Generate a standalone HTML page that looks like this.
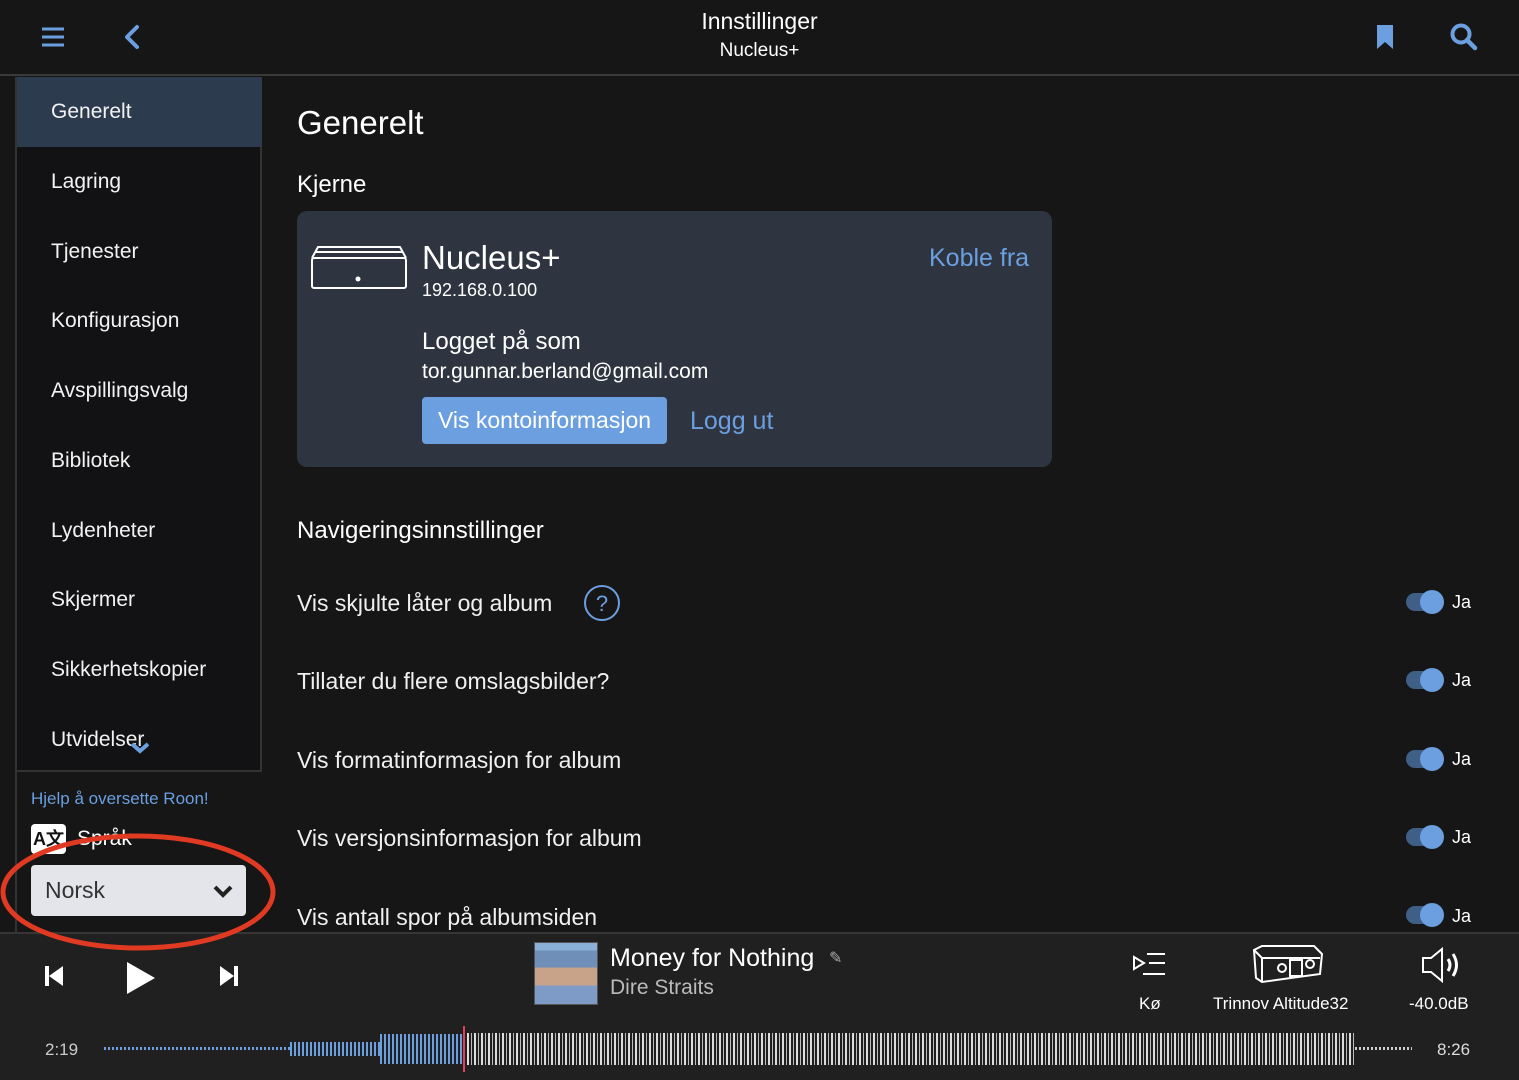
<!DOCTYPE html>
<html><head><meta charset="utf-8"><style>
*{margin:0;padding:0;box-sizing:border-box}
body{width:1519px;height:1080px;background:#161616;font-family:"Liberation Sans",sans-serif;color:#fff;position:relative;overflow:hidden}
.abs{position:absolute}
.top{left:0;top:0;width:1519px;height:76px;background:#161616;border-bottom:2px solid #3a3a3a}
.side{left:15px;top:77px;width:247px;height:856px;background:#121214;border-left:2px solid #333;border-right:2px solid #333}
.nav{position:absolute;left:0;width:245px;height:70px;font-size:21px;padding-left:34px;line-height:70px;color:#f2f2f2}
.lbl{font-size:23px;color:#f0f0f0}
.tog{position:absolute;left:1406px;width:36px;height:18px;border-radius:9px;background:#3f5f86}
.tog::after{content:"";position:absolute;right:-2px;top:-3px;width:24px;height:24px;border-radius:50%;background:#6b9fe0}
.ja{position:absolute;left:1452px;font-size:18px}
.player{left:0;top:932px;width:1519px;height:148px;background:#202020;border-top:2px solid #363636}
</style></head><body>
<div class="abs top">
 <svg class="abs" style="left:40px;top:26px" width="26" height="22"><g stroke="#6b9fe0" stroke-width="3"><line x1="2" y1="3" x2="24" y2="3"/><line x1="2" y1="11" x2="24" y2="11"/><line x1="2" y1="19" x2="24" y2="19"/></g></svg>
 <svg class="abs" style="left:122px;top:24px" width="20" height="26"><polyline points="15,3 5,13 15,23" fill="none" stroke="#6b9fe0" stroke-width="4" stroke-linecap="round" stroke-linejoin="round"/></svg>
 <div class="abs" style="left:0;width:1519px;top:8px;text-align:center;font-size:23px">Innstillinger</div>
 <div class="abs" style="left:0;width:1519px;top:40px;text-align:center;font-size:19px">Nucleus+</div>
 <svg class="abs" style="left:1375px;top:23px" width="20" height="28"><path d="M2 2H18V26L10 19L2 26Z" fill="#6b9fe0"/></svg>
 <svg class="abs" style="left:1449px;top:22px" width="30" height="30"><circle cx="12" cy="12" r="8.5" fill="none" stroke="#6b9fe0" stroke-width="4"/><line x1="18" y1="18" x2="26" y2="26" stroke="#6b9fe0" stroke-width="4.5" stroke-linecap="round"/></svg>
</div>
<div class="abs side">
 <div class="nav" style="top:0;background:#2d3b4f">Generelt</div>
 <div class="nav" style="top:70px">Lagring</div>
 <div class="nav" style="top:140px">Tjenester</div>
 <div class="nav" style="top:209px">Konfigurasjon</div>
 <div class="nav" style="top:279px">Avspillingsvalg</div>
 <div class="nav" style="top:349px">Bibliotek</div>
 <div class="nav" style="top:419px">Lydenheter</div>
 <div class="nav" style="top:488px">Skjermer</div>
 <div class="nav" style="top:558px">Sikkerhetskopier</div>
 <div class="nav" style="top:628px">Utvidelser</div>
 <svg class="abs" style="left:112px;top:664px" width="22" height="14"><polyline points="3,3 11,10 19,3" fill="none" stroke="#6b9fe0" stroke-width="4"/></svg>
 <div class="abs" style="left:0;top:693px;width:245px;height:2px;background:#333"></div>
 <div class="abs" style="left:0;top:695px;width:245px;height:161px;background:#161616"></div>
 <div class="abs" style="left:14px;top:712px;font-size:17px;color:#6b9fe0">Hjelp å oversette Roon!</div>
 <div class="abs" style="left:14px;top:747px;width:35px;height:30px;background:#fff;border-radius:4px;color:#111;font-weight:bold;font-size:18px;line-height:30px;text-align:center">A文</div>
 <div class="abs" style="left:60px;top:750px;font-size:21px">Språk</div>
 <div class="abs" style="left:14px;top:788px;width:215px;height:51px;background:#e3e5ea;border-radius:4px;color:#333;font-size:23px;line-height:51px;padding-left:14px">Norsk</div>
 <svg class="abs" style="left:195px;top:806px" width="22" height="16"><polyline points="3,4 11,12 19,4" fill="none" stroke="#222" stroke-width="4"/></svg>
</div>
<div class="abs" style="left:297px;top:104px;font-size:33px">Generelt</div>
<div class="abs" style="left:297px;top:171px;font-size:24px">Kjerne</div>
<div class="abs" style="left:297px;top:211px;width:755px;height:256px;background:#2f3540;border-radius:10px">
 <svg class="abs" style="left:13px;top:33px" width="100" height="48" fill="none" stroke="#fff" stroke-width="2"><path d="M2 14L8 3H90L96 14"/><line x1="5" y1="8" x2="93" y2="8"/><rect x="2" y="14" width="94" height="30" rx="2"/><circle cx="48" cy="35" r="2.5" fill="#fff" stroke="none"/></svg>
 <div class="abs" style="left:125px;top:28px;font-size:33px">Nucleus+</div>
 <div class="abs" style="left:125px;top:69px;font-size:18px">192.168.0.100</div>
 <div class="abs" style="left:632px;top:33px;font-size:25px;color:#6b9fe0">Koble fra</div>
 <div class="abs" style="left:125px;top:117px;font-size:24px">Logget på som</div>
 <div class="abs" style="left:125px;top:149px;font-size:21px">tor.gunnar.berland@gmail.com</div>
 <div class="abs" style="left:125px;top:186px;width:245px;height:47px;background:#6b9fe0;border-radius:4px;font-size:23px;line-height:47px;text-align:center">Vis kontoinformasjon</div>
 <div class="abs" style="left:393px;top:196px;font-size:25px;color:#6b9fe0">Logg ut</div>
</div>
<div class="abs" style="left:297px;top:517px;font-size:24px">Navigeringsinnstillinger</div>
<div class="abs lbl" style="left:297px;top:590px">Vis skjulte låter og album</div>
<svg class="abs" style="left:583px;top:584px" width="38" height="38"><circle cx="19" cy="19" r="17" fill="none" stroke="#6b9fe0" stroke-width="2"/><text x="19" y="27" text-anchor="middle" font-size="22" fill="#6b9fe0" font-family="Liberation Sans">?</text></svg>
<div class="abs lbl" style="left:297px;top:668px">Tillater du flere omslagsbilder?</div>
<div class="abs lbl" style="left:297px;top:747px">Vis formatinformasjon for album</div>
<div class="abs lbl" style="left:297px;top:825px">Vis versjonsinformasjon for album</div>
<div class="abs lbl" style="left:297px;top:904px">Vis antall spor på albumsiden</div>
<div class="tog" style="top:593px"></div><div class="ja" style="top:592px">Ja</div>
<div class="tog" style="top:671px"></div><div class="ja" style="top:670px">Ja</div>
<div class="tog" style="top:750px"></div><div class="ja" style="top:749px">Ja</div>
<div class="tog" style="top:828px"></div><div class="ja" style="top:827px">Ja</div>
<div class="tog" style="top:906px"></div><div class="ja" style="top:906px">Ja</div>
<svg class="abs" style="left:0;top:830px;z-index:5" width="285" height="125"><ellipse cx="138" cy="62" rx="135" ry="56" fill="none" stroke="#e03a22" stroke-width="5"/></svg>
<div class="abs player">
 <svg class="abs" style="left:43px;top:30px" width="22" height="24" fill="#fff"><rect x="2" y="2" width="4" height="20"/><polygon points="20,2 20,22 6,12"/></svg>
 <svg class="abs" style="left:124px;top:26px" width="34" height="36" fill="#fff"><polygon points="3,2 31,18 3,34"/></svg>
 <svg class="abs" style="left:218px;top:30px" width="22" height="24" fill="#fff"><polygon points="2,2 16,12 2,22"/><rect x="16" y="2" width="4" height="20"/></svg>
 <div class="abs" style="left:534px;top:8px;width:64px;height:63px;background:linear-gradient(#8ab0d8 0 12%,#6f8fb9 12% 40%,#c9a28a 40% 70%,#7d9bc6 70%);border:1px solid #555"></div>
 <div class="abs" style="left:610px;top:10px;font-size:25px">Money for Nothing</div>
 <div class="abs" style="left:829px;top:14px;font-size:16px;color:#aaa">✎</div>
 <div class="abs" style="left:610px;top:42px;font-size:21px;color:#bbb">Dire Straits</div>
 <svg class="abs" style="left:1131px;top:18px" width="36" height="26" fill="none" stroke="#fff" stroke-width="2"><polygon points="3,5 13,11 3,17"/><line x1="16" y1="2" x2="34" y2="2"/><line x1="18" y1="11" x2="34" y2="11"/><line x1="12" y1="22" x2="34" y2="22"/></svg>
 <div class="abs" style="left:1139px;top:60px;font-size:17px">Kø</div>
 <svg class="abs" style="left:1252px;top:10px" width="74" height="40" fill="none" stroke="#fff" stroke-width="2"><path d="M2 6L10 2H62L70 10L68 30L10 38L4 34Z"/><path d="M2 6L10 14H68"/><path d="M10 14V38"/><circle cx="30" cy="24" r="4"/><rect x="38" y="16" width="12" height="16"/><circle cx="58" cy="20" r="4"/></svg>
 <div class="abs" style="left:1213px;top:60px;font-size:17px">Trinnov Altitude32</div>
 <svg class="abs" style="left:1420px;top:12px" width="42" height="38" fill="none" stroke="#fff" stroke-width="2"><path d="M3 12H11L22 3V35L11 26H3Z"/><path d="M28 13Q32 19 28 25" stroke-width="3"/><path d="M33 8Q40 19 33 30" stroke-width="3"/></svg>
 <div class="abs" style="left:1409px;top:60px;font-size:17px">-40.0dB</div>
 <div class="abs" style="left:45px;top:106px;font-size:17px;color:#ccc">2:19</div>
 <div class="abs" style="left:1437px;top:106px;font-size:17px;color:#ddd">8:26</div>
 <div class="abs" style="left:104px;top:113px;width:186px;height:3px;background:repeating-linear-gradient(90deg,#6b9fe0 0 2px,transparent 2px 4px)"></div>
 <div class="abs" style="left:290px;top:108px;width:90px;height:14px;background:repeating-linear-gradient(90deg,#6b9fe0 0 2px,transparent 2px 4px)"></div>
 <div class="abs" style="left:380px;top:100px;width:84px;height:30px;background:repeating-linear-gradient(90deg,#6b9fe0 0 2px,transparent 2px 4px)"></div>
 <div class="abs" style="left:463px;top:92px;width:2px;height:46px;background:#e04060"></div>
 <div class="abs" style="left:467px;top:99px;width:888px;height:32px;background:repeating-linear-gradient(90deg,#ddd 0 2px,transparent 2px 4px,#bbb 4px 5px,transparent 5px 7px)"></div>
 <div class="abs" style="left:1355px;top:113px;width:57px;height:3px;background:repeating-linear-gradient(90deg,#ccc 0 2px,transparent 2px 4px)"></div>
</div>
</body></html>
